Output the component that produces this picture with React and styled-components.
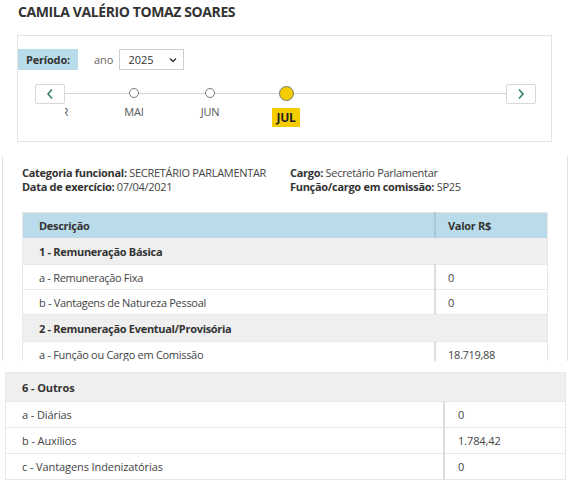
import React from 'react'
import styled, { createGlobalStyle } from 'styled-components'

const GlobalStyle = createGlobalStyle`
    body {
        margin: 0;
        background: #fff;
        font-family: "Open Sans", "Liberation Sans", sans-serif;
        color: #333;
    }
`;

const Page = styled.div`
    width: 569px;
    height: 491px;
    overflow: hidden;
`;

const Title = styled.h1`
    margin: 0;
    padding: 2px 0 0 18px;
    font-size: 14px;
    letter-spacing: -0.4px;
    line-height: 20px;
    font-weight: 700;
    color: #333;
`;

const Panel = styled.div`
    margin: 13px 0 0 17px;
    width: 535px;
    height: 107px;
    box-sizing: border-box;
    border: 1px solid #e3e3e3;
    padding-top: 13px;
`;

const PeriodRow = styled.div`
    display: flex;
    align-items: center;
    height: 21px;
`;

const PeriodLabel = styled.div`
    width: 60px;
    height: 21px;
    background: #b8dcea;
    font-size: 11px;
    letter-spacing: -0.2px;
    font-weight: 700;
    line-height: 21px;
    text-align: center;
    color: #333;
`;

const YearText = styled.span`
    margin-left: 16px;
    font-size: 11px;
    color: #666;
`;

const YearSelect = styled.div`
    margin-left: 6px;
    width: 65px;
    height: 21px;
    box-sizing: border-box;
    border: 1px solid #cfcfcf;
    display: flex;
    align-items: center;
    justify-content: space-between;
    padding: 0 6px 0 8px;
    font-size: 11px;
    color: #333;
`;

const Timeline = styled.div`
    display: flex;
    align-items: flex-start;
    margin-top: 14px;
    padding: 0 15px 0 17px;
`;

const NavButton = styled.button`
    width: 30px;
    height: 20px;
    flex: none;
    padding: 0;
    display: flex;
    align-items: center;
    justify-content: center;
    background: #fff;
    border: 1px solid #d8d8d8;
    border-radius: 2px;
    position: relative;
    z-index: 1;
`;

const Track = styled.div`
    flex: 1;
    position: relative;
    height: 44px;
    overflow: hidden;

    &::before {
        content: '';
        position: absolute;
        left: 0;
        right: 0;
        top: 9px;
        height: 1px;
        background: #d4d4d4;
    }
`;

const Months = styled.div`
    display: flex;
    margin-left: -45px;
    position: relative;
`;

const Month = styled.div`
    width: 76px;
    flex: none;
    display: flex;
    flex-direction: column;
    align-items: center;
`;

const Dot = styled.div`
    height: 20px;
    display: flex;
    align-items: center;
    justify-content: center;
    margin-top: -1px;

    span {
        display: block;
        box-sizing: border-box;
        width: ${p => (p.$active ? '15px' : '10px')};
        height: ${p => (p.$active ? '15px' : '10px')};
        border-radius: 50%;
        border: 1px solid #777;
        background: ${p => (p.$active ? '#f5cc00' : '#fff')};
    }
`;

const MonthLabel = styled.div`
    font-size: ${p => (p.$active ? '12px' : '11px')};
    font-weight: ${p => (p.$active ? 700 : 400)};
    line-height: ${p => (p.$active ? '19px' : '14px')};
    padding: ${p => (p.$active ? '0 4px' : '0')};
    margin-top: ${p => (p.$active ? '5px' : '2px')};
    background: ${p => (p.$active ? '#f5cc00' : 'transparent')};
    color: ${p => (p.$active ? '#222' : '#555')};
    letter-spacing: -0.2px;
`;

const Detail = styled.section`
    margin: 14px 0 0 2px;
    width: 566px;
    height: 205px;
    box-sizing: border-box;
    overflow: hidden;
    border-left: 1px solid #e2e2e2;
    border-right: 1px solid #e2e2e2;
    padding: 10px 18px 0 19px;
`;

const InfoGrid = styled.div`
    display: grid;
    grid-template-columns: 268px 1fr;
    font-size: 11px;
    letter-spacing: -0.3px;
    line-height: 14px;
    color: #444;
    white-space: nowrap;

    b {
        color: #333;
        font-weight: 700;
    }
`;

const Table = styled.table`
    width: ${p => p.$width}px;
    border-collapse: collapse;
    font-size: 11px;
    letter-spacing: ${p => p.$spacing}px;
    color: #444;
    margin: ${p => p.$margin};
    border: 1px solid #e8e8e8;
`;

const HeadCell = styled.th`
    background: #badcea;
    height: 25px;
    padding: 0 0 0 ${p => p.$pad}px;
    text-align: left;
    font-weight: 700;
    color: #333;
    border-right: ${p => (p.$divider ? '2px solid #a9c9d6' : 'none')};
    width: ${p => (p.$w ? p.$w + 'px' : 'auto')};
`;

const GroupCell = styled.td`
    background: #efefef;
    height: ${p => p.$height}px;
    padding: 0 0 0 ${p => p.$pad}px;
    font-weight: 700;
    color: #333;
    border-bottom: 1px solid #e8e8e8;
`;

const Cell = styled.td`
    height: ${p => p.$height}px;
    padding: 0 0 0 ${p => p.$pad}px;
    border-bottom: 1px solid #e8e8e8;
    border-right: ${p => (p.$divider ? '2px solid #dedede' : 'none')};
    width: ${p => (p.$w ? p.$w + 'px' : 'auto')};
    white-space: nowrap;
`;

const months = ['ABR', 'MAI', 'JUN', 'JUL']

const topRows = [
    { group: '1 - Remuneração Básica' },
    { label: 'a - Remuneração Fixa', value: '0' },
    { label: 'b - Vantagens de Natureza Pessoal', value: '0' },
    { group: '2 - Remuneração Eventual/Provisória' },
    { label: 'a - Função ou Cargo em Comissão', value: '18.719,88' },
]

const bottomRows = [
    { group: '6 - Outros' },
    { label: 'a - Diárias', value: '0' },
    { label: 'b - Auxílios', value: '1.784,42' },
    { label: 'c - Vantagens Indenizatórias', value: '0' },
]

function Rows({ rows, height, groupHeight, pad, valuePad, labelWidth }) {
    return rows.map((r, i) =>
        r.group ? (
            <tr key={i}>
                <GroupCell colSpan={2} $height={groupHeight} $pad={pad}>{r.group}</GroupCell>
            </tr>
        ) : (
            <tr key={i}>
                <Cell $height={height} $pad={pad} $divider $w={labelWidth}>{r.label}</Cell>
                <Cell $height={height} $pad={valuePad}>{r.value}</Cell>
            </tr>
        )
    )
}

export default function App() {
    return (
        <Page>
            <GlobalStyle />
            <Title>CAMILA VALÉRIO TOMAZ SOARES</Title>
            <Panel>
                <PeriodRow>
                    <PeriodLabel>Período:</PeriodLabel>
                    <YearText>ano</YearText>
                    <YearSelect>
                        2025
                        <svg width="8" height="6" viewBox="0 0 8 6">
                            <path d="M1 1.5 L4 4.5 L7 1.5" fill="none" stroke="#333" strokeWidth="1.4" />
                        </svg>
                    </YearSelect>
                </PeriodRow>
                <Timeline>
                    <NavButton aria-label="anterior">
                        <svg width="8" height="12" viewBox="0 0 8 12">
                            <path d="M6 1.5 L2 6 L6 10.5" fill="none" stroke="#2e7d5b" strokeWidth="1.5" />
                        </svg>
                    </NavButton>
                    <Track>
                        <Months>
                            {months.map(m => (
                                <Month key={m}>
                                    <Dot $active={m === 'JUL'}><span /></Dot>
                                    <MonthLabel $active={m === 'JUL'}>{m}</MonthLabel>
                                </Month>
                            ))}
                        </Months>
                    </Track>
                    <NavButton aria-label="próximo">
                        <svg width="8" height="12" viewBox="0 0 8 12">
                            <path d="M2 1.5 L6 6 L2 10.5" fill="none" stroke="#2e7d5b" strokeWidth="1.5" />
                        </svg>
                    </NavButton>
                </Timeline>
            </Panel>
            <Detail>
                <InfoGrid>
                    <div><b>Categoria funcional:</b> SECRETÁRIO PARLAMENTAR</div>
                    <div><b>Cargo:</b> Secretário Parlamentar</div>
                    <div><b>Data de exercício:</b> 07/04/2021</div>
                    <div><b>Função/cargo em comissão:</b> SP25</div>
                </InfoGrid>
                <Table $width={526} $margin="18px 0 0 0" $spacing={-0.3}>
                    <thead>
                        <tr>
                            <HeadCell $pad={16} $divider $w={395}>Descrição</HeadCell>
                            <HeadCell $pad={12}>Valor R$</HeadCell>
                        </tr>
                    </thead>
                    <tbody>
                        <Rows rows={topRows} height={24} groupHeight={26} pad={16} valuePad={12} labelWidth={395} />
                    </tbody>
                </Table>
            </Detail>
            <Table $width={561} $margin="11px 0 0 5px" $spacing={-0.1}>
                <tbody>
                    <Rows rows={bottomRows} height={25} groupHeight={28} pad={16} valuePad={13} labelWidth={421} />
                </tbody>
            </Table>
        </Page>
    )
}
